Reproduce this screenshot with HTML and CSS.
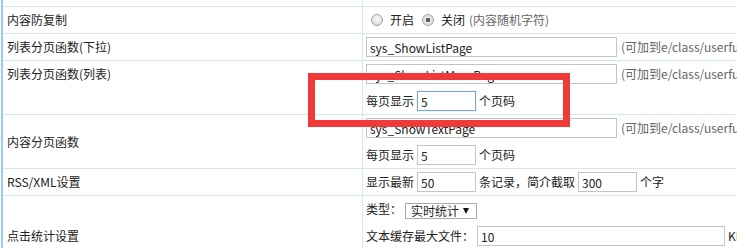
FILE: index.html
```html
<!DOCTYPE html>
<html lang="zh-CN">
<head>
  <meta charset="UTF-8" />
  <title>系统参数设置</title>
  <link rel="stylesheet" href="styles.css">
</head>
<body>

  <div class="frame">
    <table class="settings">
      <tr>
        <td class="label"></td>
        <td class="value"><div class="line"><span class="cut">字数 个字符</span></div></td>
      </tr>
      <tr>
        <td class="label">内容防复制</td>
        <td class="value">
          <div class="line slim">
            <label class="radio"><input type="radio" name="copy">开启</label>
            <label class="radio"><input type="radio" name="copy" checked>关闭</label>
            <span class="hint">(内容随机字符)</span>
          </div>
        </td>
      </tr>
      <tr>
        <td class="label">列表分页函数(下拉)</td>
        <td class="value">
          <div class="line">
            <input type="text" class="long" value="sys_ShowListPage">
            <span class="hint">(可加到e/class/userfun.php文件中)</span>
          </div>
        </td>
      </tr>
      <tr>
        <td class="label top">列表分页函数(列表)</td>
        <td class="value">
          <div class="lines">
            <div class="line">
              <input type="text" class="long" value="sys_ShowListMorePage">
              <span class="hint">(可加到e/class/userfun.php文件中)</span>
            </div>
            <div class="line">
              每页显示 <input type="text" class="short focus" value="5"> 个页码
            </div>
          </div>
        </td>
      </tr>
      <tr>
        <td class="label">内容分页函数</td>
        <td class="value">
          <div class="lines">
            <div class="line">
              <input type="text" class="long" value="sys_ShowTextPage">
              <span class="hint">(可加到e/class/userfun.php文件中)</span>
            </div>
            <div class="line">
              每页显示 <input type="text" class="short" value="5"> 个页码
            </div>
          </div>
        </td>
      </tr>
      <tr>
        <td class="label">RSS/XML设置</td>
        <td class="value">
          <div class="line">
            显示最新 <input type="text" class="short" value="50"> 条记录，简介截取 <input type="text" class="short" value="300"> 个字
          </div>
        </td>
      </tr>
      <tr>
        <td class="label">点击统计设置</td>
        <td class="value">
          <div class="lines">
            <div class="line">
              类型： <span class="select">实时统计</span>
            </div>
            <div class="line">
              文本缓存最大文件： <input type="text" class="file" value="10"> KB
            </div>
            <div class="line">
              缓存统计间隔： <input type="text" class="short" value="60"> 秒
            </div>
          </div>
        </td>
      </tr>
    </table>

    <!-- highlight box drawn over the form -->
    <div class="mark"></div>
  </div>

</body>
</html>
```

FILE: styles.css
```css
html, body {
  margin: 0;
  background: #ffffff;
  overflow: hidden;
}

body {
  font-family: "Noto Sans CJK SC", "Noto Sans", sans-serif;
  font-size: 12px;
  color: #222;
}

.frame {
  position: relative;
  height: 248px;
  margin-left: 1px;
  border-left: 2px solid #97cdee;
  overflow: hidden;
}

.settings {
  width: 980px;
  margin-top: -20px;
  border-collapse: separate;
  border-spacing: 0;
}

.settings td {
  border-bottom: 1px solid #d4e7f4;
  padding: 3px;
  line-height: 20px;
  vertical-align: middle;
  white-space: nowrap;
}

.settings td.label {
  box-sizing: border-box;
  width: 360px;
  padding-left: 4px;
  border-right: 1px solid #d4e7f4;
}

.settings td.top {
  vertical-align: top;
}

.cut {
  padding-left: 26px;
}

.lines {
  display: flex;
  flex-direction: column;
  gap: 7px;
}

.line {
  height: 20px;
  display: flex;
  align-items: center;
  gap: 3px;
}

.line.slim {
  height: 19px;
  gap: 0;
}

input[type="text"] {
  box-sizing: border-box;
  height: 20px;
  margin: 0;
  padding: 0 3px;
  border: 1px solid #c4c4c4;
  background: #fff;
  font-family: inherit;
  font-size: 12px;
  color: #222;
}

input.long {
  width: 251px;
}

input.short {
  width: 59px;
}

input.file {
  width: 248px;
}

input.focus {
  border-color: #7aa7d6;
  box-shadow: 0 0 1px #9cc1e6;
}

.hint {
  color: #666;
  margin-left: 1px;
}

.radio {
  display: inline-flex;
  align-items: center;
  margin-right: 3px;
}

.radio input {
  -webkit-appearance: none;
  appearance: none;
  width: 12px;
  height: 12px;
  margin: 0 7px 0 5px;
  border: 1px solid #a4a4a4;
  border-radius: 50%;
  background: radial-gradient(circle at 50% 40%, #fbfbfb, #d2d2d2);
  box-sizing: border-box;
}

.radio input:checked {
  background: radial-gradient(circle, #5a5a5a 0 2px, #e9e9e9 2.5px, #d0d0d0);
}

.select {
  position: relative;
  display: inline-block;
  box-sizing: border-box;
  width: 72px;
  height: 16px;
  margin-top: 4px;
  padding: 0 0 0 5px;
  border: 1px solid #ababab;
  line-height: 14px;
  background: #fff;
}

.select::after {
  content: "";
  position: absolute;
  right: 7px;
  top: 4px;
  border-left: 3px solid transparent;
  border-right: 3px solid transparent;
  border-top: 6px solid #111;
}

.mark {
  position: absolute;
  left: 305px;
  top: 73px;
  width: 262px;
  height: 54px;
  box-sizing: border-box;
  border: 7px solid #f03a3a;
}
```
